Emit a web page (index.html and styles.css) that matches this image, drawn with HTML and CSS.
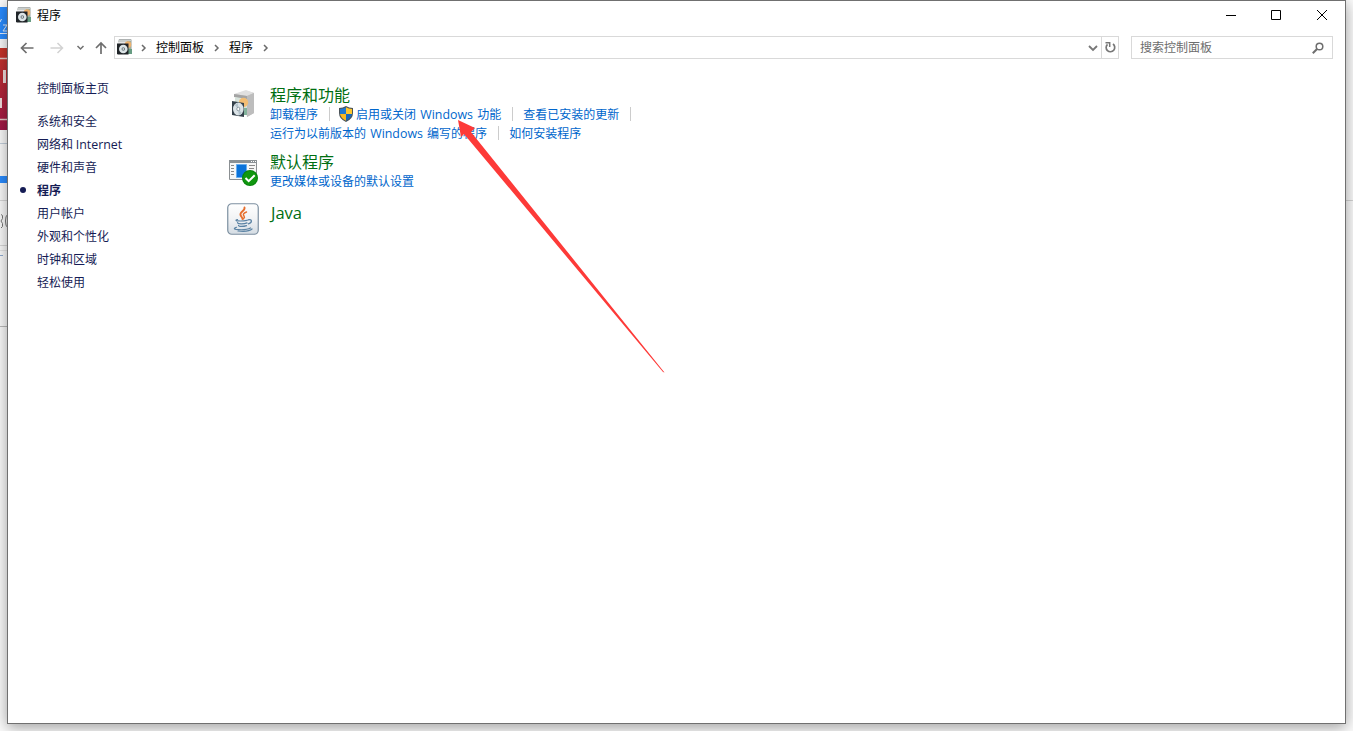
FILE: index.html
```html
<!DOCTYPE html>
<html lang="zh-CN">
<head>
<meta charset="utf-8">
<title>程序</title>
<link rel="stylesheet" href="styles.css">
</head>
<body>
<svg class="defs" aria-hidden="true">
  <symbol id="disc-box" viewBox="0 0 16 16">
    <path d="M2 0h12l1 1v14h-5V4H1V2z" fill="#c9cdcb"/>
    <path d="M2 0h12v1H2z" fill="#aeb2b2"/>
    <path d="M1 3h9v2H1z" fill="#e7e7e7"/>
    <path d="M10 2h4v13h-3z" fill="#9fae9d"/>
    <circle cx="11" cy="5.500" r="3.200" fill="#eeb16c"/>
    <path d="M11 10h4v5h-4z" fill="#679c82"/>
    <path d="M0 4.500h11.500V15.500H1L0 15z" fill="#202428"/>
    <circle cx="6.300" cy="10" r="4.300" fill="#dce4e6"/>
    <circle cx="6.300" cy="10" r="1.800" fill="#68757b"/>
    <circle cx="6.300" cy="10" r=".8" fill="#fff"/>
  </symbol>
</svg>
<div class="desktop">
  <div class="behind">
    <svg width="8" height="731" viewBox="0 0 8 731">
      <defs><linearGradient id="red" x1="0" y1="0" x2="0" y2="1"><stop offset="0" stop-color="#c93629"/><stop offset="1" stop-color="#a01848"/></linearGradient></defs>
      <rect y="7" width="8" height="32" fill="#2a8cff"/>
      <path d="M0 22l1.500-3M3 25h4l-4 6h4M0 33.500h8" fill="none" stroke="#e4efff"/>
      <rect y="48" width="8" height="82" fill="url(#red)"/>
      <path d="M0 58.500h8M0 119.500h8" stroke="#e5c9c7" stroke-width="1.500"/>
      <path d="M3 70h3v13H3zM0 98h2v10H0z" fill="#f0dedd"/>
      <path d="M0 143.500h8" stroke="#c4d0dc"/>
      <rect y="176" width="8" height="7" fill="#2a8cff"/>
      <path d="M0 200.500h8M0 245.500h8" stroke="#d8d8d8"/>
      <path d="M0 250.500h8" stroke="#e6e6e6"/>
      <path d="M1 214.500l1.500 1v3l-1.500 2.500 1.500 2.500v3l-1.500 1.500M7.500 214.500q-2 1.500-2 6.500t2 6.500" fill="none" stroke="#777"/>
      <path d="M0 255.500h3" stroke="#8facd2"/>
      <path d="M0 326.500h8" stroke="#bbb"/>
    </svg>
    <div class="behind-right"></div>
  </div>
  <div class="window">
    <header class="titlebar">
      <svg class="app-icon" width="16" height="16"><use href="#disc-box"/></svg>
      <span class="title">程序</span>
      <div class="controls">
        <svg width="46" height="29"><path d="M19 14.500h10" stroke="#000"/></svg>
        <svg width="45" height="29"><path d="M18.500 9.500h9v9h-9z" fill="none" stroke="#000"/></svg>
        <svg width="47" height="29"><path d="M19 9l10 10M29 9l-10 10" stroke="#000" fill="none"/></svg>
      </div>
    </header>
    <nav class="navbar">
      <svg class="arrows" width="106" height="23" fill="none">
        <path d="M13.500 12h12M18.500 7l-5 5 5 5" stroke="#6e6e6e" stroke-width="1.700"/>
        <path d="M42.500 12h12M49.500 7l5 5-5 5" stroke="#d2d2d2" stroke-width="1.500"/>
        <path d="M69.500 10l3 3 3-3" stroke="#707070" stroke-width="1.500"/>
        <path d="M93 18V7M88 12l5-5 5 5" stroke="#6e6e6e" stroke-width="1.700"/>
      </svg>
      <div class="address">
        <svg class="addr-icon" width="16" height="16"><use href="#disc-box"/></svg>
        <svg class="chev" width="6" height="8"><path d="M1 1l3 3-3 3"/></svg>
        <span>控制面板</span>
        <svg class="chev" width="6" height="8"><path d="M1 1l3 3-3 3"/></svg>
        <span>程序</span>
        <svg class="chev" width="6" height="8"><path d="M1 1l3 3-3 3"/></svg>
        <svg class="drop" width="17" height="21"><path d="M5 9l4 4 4-4" fill="none" stroke="#777" stroke-width="1.800"/></svg>
        <svg class="refresh" width="17" height="21"><path d="M11 7a4.300 4.300 0 1 1-5.500.3" fill="none" stroke="#777" stroke-width="1.700"/><path d="M3.500 5.800h4.200v4.200" fill="none" stroke="#777" stroke-width="1.500"/></svg>
      </div>
      <div class="search">
        <span>搜索控制面板</span>
        <svg width="12" height="12"><circle cx="7.500" cy="4.500" r="3.300" fill="none" stroke="#6e6e6e" stroke-width="1.500"/><path d="M5 7L.8 11.200" stroke="#6e6e6e" stroke-width="2"/></svg>
      </div>
    </nav>
    <div class="body">
      <aside class="side">
        <a class="home">控制面板主页</a>
        <a>系统和安全</a>
        <a>网络和 <span class="latin">Internet</span></a>
        <a>硬件和声音</a>
        <a class="current">程序</a>
        <a>用户帐户</a>
        <a>外观和个性化</a>
        <a>时钟和区域</a>
        <a>轻松使用</a>
      </aside>
      <main class="main">
        <section class="category first">
          <svg class="cat-icon" width="32" height="32" viewBox="0 0 32 32">
            <path d="M8 6L20 3l7 2v20l-7 4-2-16-9-2z" fill="#c3c3c3"/>
            <path d="M7 6l12-4 8 3-7 3z" fill="#e0e0e0"/>
            <path d="M7 6l13 2v4L7 9z" fill="#a4a4a4"/>
            <path d="M20 8l7-3v20l-7 4z" fill="#bdbdbd"/>
            <path d="M8 9l12 2v15H8z" fill="#d8e3dc"/>
            <circle cx="16.500" cy="14.500" r="4.700" fill="#f2bd74"/>
            <path d="M16 20h4v7h-4z" fill="#83b39c"/>
            <path d="M5 13l12 2v14L5 27z" fill="#34404a"/>
            <ellipse cx="11.300" cy="21" rx="5.300" ry="6.500" fill="#dbe3e7"/>
            <path d="M11.300 21l-3.500-4 3-2zM11.300 21l3.500 4-3 2z" fill="#b5c4cc"/>
            <ellipse cx="11.300" cy="21" rx="1.500" ry="1.800" fill="#fff" stroke="#7d8b94" stroke-width=".8"/>
          </svg>
          <div class="text">
            <h2>程序和功能</h2>
            <div class="links">
              <a>卸载程序</a><i></i>
              <a class="shielded"><svg width="14" height="16" viewBox="0 0 14 16"><path d="M7 0q3 2 7 2v5q0 6-7 9-7-3-7-9V2q4 0 7-2z" fill="#4a5358"/><path d="M7 1.300V8H1V3q3.500 0 6-1.700z" fill="#1e78cf"/><path d="M7 1.300Q9.500 3 13 3v5H7z" fill="#fcc62f"/><path d="M1 8h6v6.700Q2 12.500 1 8z" fill="#f9b91f"/><path d="M7 8h6q-1 4.500-6 6.700z" fill="#1868bd"/></svg><span>启用或关闭 <span class="latin">Windows</span> 功能</span></a><i></i>
              <a>查看已安装的更新</a><i></i>
            </div>
            <div class="links">
              <a>运行为以前版本的 <span class="latin">Windows</span> 编写的程序</a><i></i>
              <a>如何安装程序</a>
            </div>
          </div>
        </section>
        <section class="category second">
          <svg class="cat-icon" width="32" height="32" viewBox="0 0 32 32">
            <path d="M2.500 5.500h27v19h-27z" fill="#f6f6f6" stroke="#8b8f92"/>
            <path d="M2 5h28v3H2z" fill="#8b9195"/>
            <path d="M24 6.500h1M26 6.500h1M28 6.500h1" stroke="#fff"/>
            <path d="M4 10.500h3M4 13.500h3M4 16.500h3M4 19.500h3M22 10.500h6M22 13.500h5" stroke="#888"/>
            <path d="M9.500 9.500h10v13h-10z" fill="#0b72d9" stroke="#67adf0"/>
            <circle cx="23" cy="23" r="8" fill="#07830c"/><circle cx="23" cy="23" r="7" fill="#10970f"/>
            <path d="M18.500 23l3.200 3.200 6-6" fill="none" stroke="#fff" stroke-width="2"/>
          </svg>
          <div class="text">
            <h2>默认程序</h2>
            <div class="links"><a>更改媒体或设备的默认设置</a></div>
          </div>
        </section>
        <section class="category third">
          <svg class="cat-icon" width="32" height="32" viewBox="0 0 32 32">
            <defs><linearGradient id="tile" x1="0" y1="0" x2="0" y2="1"><stop offset="0" stop-color="#fff"/><stop offset=".5" stop-color="#f1f3f5"/><stop offset="1" stop-color="#d4dce3"/></linearGradient></defs>
            <rect x=".75" y=".75" width="30.500" height="30.500" rx="4" fill="url(#tile)" stroke="#7d90a1" stroke-width="1.200"/>
            <g fill="none" stroke="#e76f2e" stroke-linecap="round">
              <path d="M17.500 4.500c1 3-5 4.500-4 7.500.4 1.500 2 2.500 2 4" stroke-width="1.900"/>
              <path d="M19.500 9c-3 1-4 2.500-2.500 4 .8 1 .3 2-.5 2.700" stroke-width="1.500"/>
            </g>
            <g fill="none" stroke="#5a82a3" stroke-width="1.200" stroke-linecap="round">
              <path d="M10.500 16.500c-5 1.600 4 2 9.500.8M10.500 19.500c0 1.800 6.500 1.600 9.500.4M11.500 22.300c0 1.600 5 1.400 8 .3M21 16.800c5-1 4 3.200.3 4"/>
              <path d="M9.500 24.300c-8 2.600 9 3.500 14 .7M11 28c5 .5 12 0 14-2"/>
            </g>
          </svg>
          <div class="text"><h2>Java</h2></div>
        </section>
      </main>
    </div>
  </div>
  <svg class="pointer" width="210" height="256" viewBox="0 0 210 256"><path d="M1 0l17 8-4 4L207.500 252.500 206 252 7 14l-3 3z" fill="#fd3a38"/></svg>
</div>
</body>
</html>
```
FILE: styles.css
```css
* { box-sizing: border-box; }
body {
  margin: 0;
  overflow: hidden;
  font: 12px/19px "Noto Sans CJK SC", sans-serif;
  color: #000;
}
svg { display: block; flex: none; }
.defs { display: none; }
.desktop {
  position: relative;
  width: 1353px;
  height: 731px;
  padding-left: 7px;
  background: #fbfbfb;
  overflow: hidden;
}
.behind {
  position: absolute;
  inset: 0;
  display: flex;
  justify-content: space-between;
}
.behind-right {
  width: 8px;
  height: 201px;
  border-bottom: 1px solid #d4d4d4;
}
.window {
  position: relative;
  display: flex;
  flex-direction: column;
  width: 1339px;
  height: 724px;
  background: #fff;
  border: 1px solid #707070;
  box-shadow: 0 3px 14px rgba(0, 0, 0, .38);
}
.titlebar {
  display: flex;
  align-items: center;
  height: 29px;
  padding-left: 8px;
}
.app-icon { margin-top: -1px; }
.title { margin: -2px 0 0 5px; }
.controls { display: flex; margin-left: auto; }
.navbar { display: flex; height: 23px; margin-top: 6px; }
.address, .search {
  display: flex;
  align-items: center;
  border: 1px solid #d9d9d9;
}
.address { width: 1005px; }
.addr-icon { margin: -1px 8px 0 2px; }
.chev { fill: none; stroke: #6b6b6b; stroke-width: 1.5; }
.address span { margin: 0 10px 3px 9px; }
.address .chev + .drop { margin-left: auto; }
.refresh { border-left: 1px solid #d9d9d9; }
.search {
  justify-content: space-between;
  width: 202px;
  margin-left: 12px;
  padding: 0 8px;
  color: #6d6d6d;
}
.search span { margin-bottom: 2px; }
.body { display: flex; flex: 1; }
.side {
  display: flex;
  flex-direction: column;
  width: 219px;
  padding: 17px 0 0 29px;
  color: #151c55;
  line-height: 23px;
}
.home { margin-bottom: 10px; }
.current { display: flex; align-items: center; font-weight: 700; }
.current::before {
  content: "";
  width: 6px;
  height: 6px;
  margin: 0 11px 0 -17px;
  border-radius: 50%;
  background: #151c55;
}
.latin { font-family: "Open Sans", sans-serif; font-size: 12.4px; line-height: 1; }
.main { padding-top: 26px; }
.category { display: flex; gap: 11px; }
.cat-icon { margin-top: 3px; }
.first { height: 67px; }
.second { height: 48px; }
h2 {
  margin: 0;
  font: 400 16px/19px "Noto Sans CJK SC", sans-serif;
  color: #006f12;
}
.third h2 { margin: 3px 0 0 1px; font-family: "Open Sans", sans-serif; font-size: 16.5px; }
.links {
  display: flex;
  align-items: center;
  height: 19px;
  color: #0066cc;
  white-space: nowrap;
  word-spacing: 1.5px;
}
.links i { width: 1px; height: 14px; margin: 0 10px 0 11px; background: #ccc; }
.shielded { display: flex; align-items: center; }
.shielded svg { margin: 0 3px 0 -1px; }
.pointer { position: absolute; left: 457px; top: 120px; }
```
